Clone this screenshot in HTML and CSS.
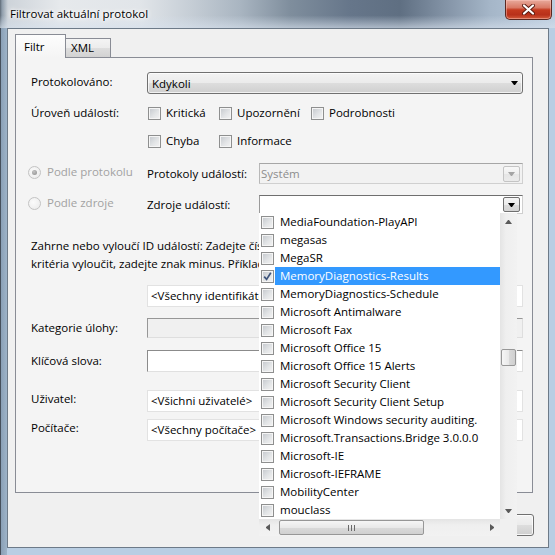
FILE: index.html
```html
<!DOCTYPE html>
<html lang="cs">
<head>
<meta charset="utf-8">
<title>Filtrovat aktuální protokol</title>
<link rel="stylesheet" href="styles.css">
</head>
<body>
<div class="window">
  <div class="titlebar">
    <span class="title">Filtrovat aktuální protokol</span>
    <div class="close">
      <svg width="13" height="11" viewBox="0 0 13 11">
        <path d="M2 1.5 L11 9.5 M11 1.5 L2 9.5" stroke="#5a1a10" stroke-width="4" stroke-linecap="round"/>
        <path d="M2 1.5 L11 9.5 M11 1.5 L2 9.5" stroke="#ffffff" stroke-width="2.2" stroke-linecap="round"/>
      </svg>
    </div>
  </div>
  <div class="frame">
    <div class="client">
      <div class="tabs">
        <div class="tab tab-active">Filtr</div>
        <div class="tab">XML</div>
      </div>
      <div class="panel">
        <div class="row row-logged">
          <span class="label">Protokolováno:</span>
          <div class="combo"><span>Kdykoli</span><span class="arrow"></span></div>
        </div>
        <div class="row row-level1">
          <span class="label">Úroveň událostí:</span>
          <div class="checks">
            <span class="chk chk-a"><span class="cb"></span>Kritická</span>
            <span class="chk chk-b"><span class="cb"></span>Upozornění</span>
            <span class="chk"><span class="cb"></span>Podrobnosti</span>
          </div>
        </div>
        <div class="row row-level2">
          <span class="label"></span>
          <div class="checks">
            <span class="chk chk-a"><span class="cb"></span>Chyba</span>
            <span class="chk chk-b"><span class="cb"></span>Informace</span>
          </div>
        </div>
        <div class="row row-bylog">
          <span class="radio-cell"><span class="rb rb-on"></span>Podle protokolu</span>
          <span class="sublabel">Protokoly událostí:</span>
          <div class="combo-dis"><span>Systém</span><span class="ddbtn ddbtn-dis"><span class="arrow"></span></span></div>
        </div>
        <div class="row row-bysrc">
          <span class="radio-cell"><span class="rb"></span>Podle zdroje</span>
          <span class="sublabel">Zdroje událostí:</span>
          <div class="combo-edit"><span class="ddbtn"><span class="arrow"></span></span></div>
        </div>
        <p class="desc">Zahrne nebo vyloučí ID událostí: Zadejte čísla ID nebo rozsahy ID oddělené čárkami. Chcete-li<br>kritéria vyloučit, zadejte znak minus. Příklad: 1,3,5-99,-76</p>
        <div class="row row-ids">
          <span class="label"></span>
          <div class="field"><span class="field-text">&lt;Všechny identifikátory událostí&gt;</span></div>
        </div>
        <div class="row row-task">
          <span class="label">Kategorie úlohy:</span>
          <div class="field field-dis"></div>
        </div>
        <div class="row row-keys">
          <span class="label">Klíčová slova:</span>
          <div class="field field-sunk"></div>
        </div>
        <div class="row row-user">
          <span class="label label-up">Uživatel:</span>
          <div class="field"><span class="field-text">&lt;Všichni uživatelé&gt;</span></div>
        </div>
        <div class="row row-pc">
          <span class="label label-up">Počítače:</span>
          <div class="field"><span class="field-text">&lt;Všechny počítače&gt;</span></div>
        </div>
      </div>
      <div class="buttons">
        <div class="btn"></div>
      </div>
    </div>
  </div>

  <div class="dropdown">
    <div class="dd-main">
      <div class="dd-items">
        <div class="dd-item"><span class="cb"></span><span class="dd-text">MediaFoundation-PlayAPI</span></div>
        <div class="dd-item"><span class="cb"></span><span class="dd-text">megasas</span></div>
        <div class="dd-item"><span class="cb"></span><span class="dd-text">MegaSR</span></div>
        <div class="dd-item dd-sel"><span class="cb cb-on"><svg width="11" height="11" viewBox="0 0 11 11"><path d="M2.2 5.6 L4.6 8.4 L8.8 1.8" fill="none" stroke="#3f557c" stroke-width="1.7"/></svg></span><span class="dd-text">MemoryDiagnostics-Results</span></div>
        <div class="dd-item"><span class="cb"></span><span class="dd-text">MemoryDiagnostics-Schedule</span></div>
        <div class="dd-item"><span class="cb"></span><span class="dd-text">Microsoft Antimalware</span></div>
        <div class="dd-item"><span class="cb"></span><span class="dd-text">Microsoft Fax</span></div>
        <div class="dd-item"><span class="cb"></span><span class="dd-text">Microsoft Office 15</span></div>
        <div class="dd-item"><span class="cb"></span><span class="dd-text">Microsoft Office 15 Alerts</span></div>
        <div class="dd-item"><span class="cb"></span><span class="dd-text">Microsoft Security Client</span></div>
        <div class="dd-item"><span class="cb"></span><span class="dd-text">Microsoft Security Client Setup</span></div>
        <div class="dd-item"><span class="cb"></span><span class="dd-text">Microsoft Windows security auditing.</span></div>
        <div class="dd-item"><span class="cb"></span><span class="dd-text">Microsoft.Transactions.Bridge 3.0.0.0</span></div>
        <div class="dd-item"><span class="cb"></span><span class="dd-text">Microsoft-IE</span></div>
        <div class="dd-item"><span class="cb"></span><span class="dd-text">Microsoft-IEFRAME</span></div>
        <div class="dd-item"><span class="cb"></span><span class="dd-text">MobilityCenter</span></div>
        <div class="dd-item"><span class="cb"></span><span class="dd-text">mouclass</span></div>
      </div>
      <div class="vscroll">
        <div class="sb-btn"><span class="tri tri-up"></span></div>
        <div class="vtrack"><div class="vthumb"></div></div>
        <div class="sb-btn"><span class="tri tri-down"></span></div>
      </div>
    </div>
    <div class="hscroll">
      <div class="sb-btn"><span class="tri tri-left"></span></div>
      <div class="htrack"><div class="hthumb"><span class="grip"></span></div></div>
      <div class="sb-btn"><span class="tri tri-right"></span></div>
      <div class="corner"></div>
    </div>
  </div>
</div>
</body>
</html>
```

FILE: styles.css
```css
* { box-sizing: border-box; margin: 0; padding: 0; }
html, body { width: 555px; height: 555px; overflow: hidden; }
body {
  font-family: "Open Sans", "Noto Sans", sans-serif;
  font-size: 11.5px;
  color: #000;
  background: #b9cde1;
}

.window {
  position: relative;
  width: 555px;
  height: 555px;
  display: flex;
  flex-direction: column;
}

/* ---------- title bar ---------- */
.titlebar {
  height: 28px;
  flex: none;
  display: flex;
  justify-content: space-between;
  align-items: flex-start;
  background:
    linear-gradient(to bottom, rgba(255,255,255,0) 55%, rgba(214,224,236,0.65) 100%),
    linear-gradient(to right, #5e6a76 0, #8f9dab 2px, #cdd3d9 8px, #e6e9ec 60px, #e1e5e9 140px,
      #c6ced6 190px, #a9b5c1 240px, #7f8e9d 290px, #66768a 350px, #5f6f82 400px,
      #7f8fa2 440px, #a5b6c8 490px, #bdcee0 555px);
}
.title {
  padding: 5px 0 0 10px;
  line-height: 17px;
  font-size: 11.5px;
  color: #000;
  text-shadow: 0 0 5px #fff, 0 0 3px #fff, 0 0 8px #fff;
}
.close {
  width: 47px;
  height: 20px;
  margin-right: 3px;
  border: 1px solid #5b2820;
  border-top: none;
  border-radius: 0 0 5px 5px;
  background: linear-gradient(#e8aa9c 0, #d97a66 40%, #c43a1f 52%, #b8301a 78%, #d35b3c 100%);
  box-shadow: inset 0 0 0 1px rgba(255, 205, 195, 0.45);
  display: flex;
  align-items: center;
  justify-content: center;
}

/* ---------- frame / client ---------- */
.frame {
  flex: 1;
  padding: 0 6px 7px 7px;
  background: linear-gradient(to right, #46505c 0, #46505c 1px, #8aa0b6 1px, #9eb3c8 7px, #b9cee3 7px);
}
.client {
  height: 100%;
  border: 1px solid #6d7a88;
  background: #f0f0f0;
  display: flex;
  flex-direction: column;
}

/* ---------- tabs ---------- */
.tabs {
  display: flex;
  align-items: flex-end;
  height: 24px;
  margin: 5px 0 -1px 7px;
  position: relative;
  z-index: 1;
}
.tab {
  width: 45px;
  height: 19px;
  margin-bottom: 1px;
  padding-left: 5px;
  border: 1px solid #898c95;
  border-left: none;
  border-bottom: none;
  line-height: 17px;
  background: linear-gradient(#f4f4f4, #ececec 50%, #dedede 51%, #d2d2d2);
}
.tab-active {
  width: 51px;
  height: 24px;
  margin-bottom: 0;
  padding: 2px 0 0 8px;
  border-left: 1px solid #898c95;
  line-height: 20px;
  background: linear-gradient(#fdfdfd, #f4f4f4);
}

/* ---------- panel ---------- */
.panel {
  width: 518px;
  height: 436px;
  margin-left: 7px;
  border: 1px solid #898c95;
  background: #f4f4f4;
  padding: 14px 9px 0 15px;
}
.row { display: flex; align-items: center; }
.label { width: 116px; flex: none; line-height: 18px; }
.row-logged .label { margin-top: -3px; }
.label-up { margin-top: -4px; }

.row-logged { height: 22px; }
.row-level1 { height: 20px; margin-top: 9px; }
.row-level2 { height: 20px; margin-top: 8px; }
.row-bylog { height: 21px; margin-top: 12px; }
.row-bysrc { height: 19px; margin-top: 11px; }
.row-ids { height: 22px; margin-top: 12px; }
.row-task { height: 20px; margin-top: 11px; }
.row-keys { height: 22px; margin-top: 12px; }
.row-user { height: 22px; margin-top: 18px; }
.row-pc { height: 22px; margin-top: 7px; }

.combo {
  flex: 1;
  height: 22px;
  display: flex;
  align-items: center;
  justify-content: space-between;
  padding: 0 4px 0 4px;
  border: 1px solid #707070;
  border-radius: 3px;
  background: linear-gradient(#f3f3f3 0, #ebebeb 50%, #dddddd 51%, #cfcfcf 100%);
  box-shadow: inset 0 0 0 1px rgba(255,255,255,0.7);
}
.arrow {
  width: 1px;
  height: 0;
  border-left: 3px solid transparent;
  border-right: 3px solid transparent;
  border-top: 4px solid #000;
  box-sizing: content-box;
}

.checks { display: flex; padding-left: 1px; }
.chk { display: flex; align-items: center; gap: 5px; line-height: 18px; }
.chk-a { width: 71px; }
.chk-b { width: 92px; }

.cb {
  width: 13px;
  height: 13px;
  flex: none;
  border: 1px solid #8e8f8f;
  background: linear-gradient(135deg, #c3c7cc 0, #e2e4e6 55%, #f4f4f4 100%);
  box-shadow: inset 0 0 0 1px #f5f5f5;
  display: flex;
  align-items: center;
  justify-content: center;
}

.radio-cell {
  width: 119px;
  margin-left: -3px;
  flex: none;
  display: flex;
  align-items: center;
  gap: 6px;
  color: #a2a2a2;
  line-height: 18px;
  margin-top: -3px;
}
.rb {
  width: 13px;
  height: 13px;
  flex: none;
  border-radius: 50%;
  border: 1px solid #c3c3c3;
  background: radial-gradient(circle at 40% 40%, #fbfbfb, #e9e9e9);
  display: flex;
  align-items: center;
  justify-content: center;
}
.rb-on::after {
  content: "";
  width: 5px;
  height: 5px;
  border-radius: 50%;
  background: radial-gradient(circle at 40% 35%, #c4c4c4, #8a8a8a);
}
.sublabel { width: 112px; flex: none; line-height: 18px; }

.combo-dis {
  flex: 1;
  height: 21px;
  border: 1px solid #d0d0d0;
  border-top-color: #a6a6a6;
  border-left-color: #b8b8b8;
  background: #f2f2f2;
  color: #8d8d8d;
  display: flex;
  align-items: center;
  justify-content: space-between;
  padding: 0 2px 0 1px;
}
.combo-edit {
  flex: 1;
  height: 19px;
  border: 1px solid #cfcfcf;
  border-top-color: #6f6f6f;
  border-left-color: #9a9a9a;
  background: #fff;
  display: flex;
  align-items: center;
  justify-content: flex-end;
  padding-right: 2px;
}
.ddbtn {
  width: 17px;
  height: 15px;
  border: 1px solid #707070;
  border-radius: 2px;
  background: linear-gradient(#f5f5f5, #ececec 50%, #dcdcdc 51%, #d4d4d4);
  display: flex;
  align-items: center;
  justify-content: center;
}
.ddbtn-dis {
  height: 16px;
  border-color: #c4c4c4;
  background: linear-gradient(#f8f8f8, #efefef 50%, #e6e6e6 51%, #ebebeb);
}
.ddbtn-dis .arrow { border-top-color: #a4a4a4; }

/* the description runs under the dropdown list; only its visible part is kept */
.desc {
  margin-top: 23px;
  width: 228px;
  line-height: 18px;
  white-space: nowrap;
  overflow: hidden;
}

.field {
  flex: 1;
  height: 22px;
  background: #fff;
  border: 1px solid #e2e2e2;
  padding-left: 3px;
  line-height: 20px;
  white-space: nowrap;
  overflow: hidden;
}
.field-text {
  display: block;
  width: 108px;
  overflow: hidden;
  white-space: nowrap;
}
.row-task .field { height: 20px; }
.field-dis {
  background: #f0f0f0;
  border-color: #979797 #dedede #dedede #979797;
}
.field-sunk {
  border-color: #8b8b8b #e0e0e0 #e0e0e0 #8b8b8b;
}

/* ---------- bottom buttons ---------- */
.buttons {
  display: flex;
  justify-content: flex-end;
  margin-top: 21px;
  padding-right: 14px;
}
.btn {
  width: 75px;
  height: 22px;
  border: 1px solid #707070;
  border-radius: 3px;
  background: linear-gradient(#f3f3f3, #ebebeb 50%, #dddddd 51%, #cfcfcf);
  box-shadow: inset 0 0 0 1px rgba(255,255,255,0.8);
}

/* ---------- dropdown list (overlay) ---------- */
.dropdown {
  position: absolute;
  left: 259px;
  top: 213px;
  width: 258px;
  background: #fff;
  z-index: 5;
}
.dd-main { display: flex; height: 306px; }
.dd-items { flex: 1; overflow: hidden; }
.dd-item {
  height: 18px;
  display: flex;
  align-items: center;
  padding-left: 2px;
  white-space: nowrap;
}
.dd-text {
  flex: 1;
  margin-left: 1px;
  padding-left: 5px;
  line-height: 18px;
}
.dd-sel .dd-text { background: #3399ff; color: #fff; }

.vscroll {
  width: 17px;
  flex: none;
  display: flex;
  flex-direction: column;
  background: linear-gradient(to right, #e4e4e4, #efefef 35%, #f2f2f2);
}
.sb-btn {
  width: 17px;
  height: 17px;
  flex: none;
  display: flex;
  align-items: center;
  justify-content: center;
}
.tri { width: 0; height: 0; display: block; }
.tri-up {
  width: 1px;
  border-left: 3px solid transparent;
  border-right: 3px solid transparent;
  border-bottom: 4px solid #5a5a5a;
  box-sizing: content-box;
}
.tri-down {
  width: 1px;
  border-left: 3px solid transparent;
  border-right: 3px solid transparent;
  border-top: 4px solid #5a5a5a;
  box-sizing: content-box;
}
.tri-left {
  height: 1px;
  border-top: 3px solid transparent;
  border-bottom: 3px solid transparent;
  border-right: 4px solid #5a5a5a;
  box-sizing: content-box;
}
.tri-right {
  height: 1px;
  border-top: 3px solid transparent;
  border-bottom: 3px solid transparent;
  border-left: 4px solid #5a5a5a;
  box-sizing: content-box;
}
.vtrack { flex: 1; padding: 119px 1px 0; }
.vthumb {
  height: 17px;
  border: 1px solid #979797;
  border-radius: 2px;
  background: linear-gradient(to right, #f6f6f6, #e9e9e9 50%, #dadada 51%, #d0d0d0);
}

.hscroll {
  display: flex;
  height: 17px;
  background: linear-gradient(#e4e4e4, #efefef 35%, #f2f2f2);
}
.htrack { flex: 1; display: flex; align-items: center; }
.hthumb {
  margin-left: 3px;
  width: 145px;
  height: 15px;
  border: 1px solid #979797;
  border-radius: 2px;
  background: linear-gradient(#f6f6f6, #e9e9e9 50%, #dadada 51%, #d0d0d0);
  display: flex;
  align-items: center;
  justify-content: center;
}
.grip {
  width: 7px;
  height: 6px;
  background: repeating-linear-gradient(to right, #6a6a6a 0, #6a6a6a 1px, transparent 1px, transparent 3px);
}
.corner { width: 17px; flex: none; background: #f0f0f0; }
```
